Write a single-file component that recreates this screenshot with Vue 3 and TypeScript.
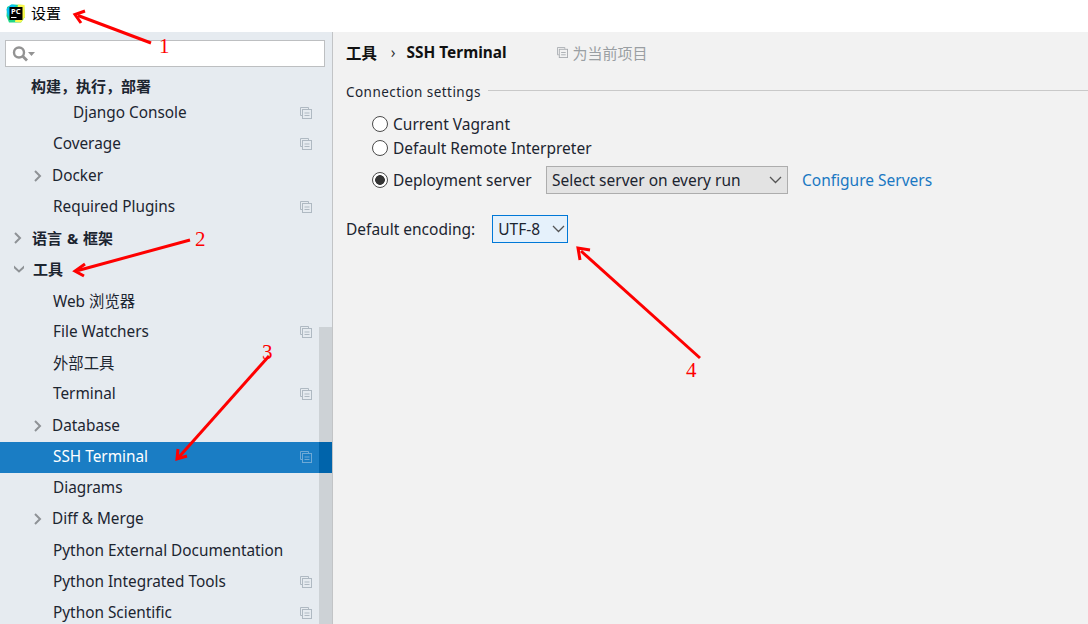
<script setup lang="ts">
type Row = {
  label: string
  indent: number
  chevron?: 'right' | 'down'
  bold?: boolean
  copy?: boolean
  selected?: boolean
}

const rows: Row[] = [
  { label: 'Django Console', indent: 73, copy: true },
  { label: 'Coverage', indent: 53, copy: true },
  { label: 'Docker', indent: 52, chevron: 'right' },
  { label: 'Required Plugins', indent: 53, copy: true },
  { label: '语言 & 框架', indent: 32, chevron: 'right', bold: true },
  { label: '工具', indent: 33, chevron: 'down', bold: true },
  { label: 'Web 浏览器', indent: 53 },
  { label: 'File Watchers', indent: 53, copy: true },
  { label: '外部工具', indent: 53 },
  { label: 'Terminal', indent: 53, copy: true },
  { label: 'Database', indent: 52, chevron: 'right' },
  { label: 'SSH Terminal', indent: 53, copy: true, selected: true },
  { label: 'Diagrams', indent: 53 },
  { label: 'Diff & Merge', indent: 52, chevron: 'right' },
  { label: 'Python External Documentation', indent: 53 },
  { label: 'Python Integrated Tools', indent: 53, copy: true },
  { label: 'Python Scientific', indent: 53, copy: true },
]

const radios = [
  { label: 'Current Vagrant', checked: false },
  { label: 'Default Remote Interpreter', checked: false },
]
</script>

<template>
  <div class="window">
    <header class="titlebar">
      <svg class="logo" width="20" height="19" viewBox="0 0 20 19">
        <path d="M1 3 L6 0.5 L18 1 L19 13 L15 18.5 L3 18.5 L0.5 12 Z" fill="#21d789" />
        <path d="M12 0.5 L18.5 1 L19 13 L15 18.5 L9 18 Z" fill="#fcf84a" />
        <path d="M0.5 5 L5 0.5 L10 1 L2 13 Z" fill="#07c3f2" />
        <rect x="3.5" y="3" width="13" height="13" fill="#000" />
        <rect x="5" y="13" width="5.5" height="1" fill="#fff" />
        <text x="5" y="10" class="logo-text">PC</text>
      </svg>
      <span class="title">设置</span>
    </header>

    <div class="body">
      <aside class="sidebar">
        <div class="search">
          <svg width="28" height="20" viewBox="0 0 28 20">
            <circle cx="8" cy="8.5" r="5" fill="none" stroke="#939393" stroke-width="2.4" />
            <path d="M11.5 12 L16 16.5" stroke="#939393" stroke-width="2.8" />
            <path d="M17 8 h7 l-3.5 4 z" fill="#939393" />
          </svg>
        </div>
        <div class="group-title">构建，执行，部署</div>
        <ul class="tree">
          <li
            v-for="row in rows"
            :key="row.label"
            class="row"
            :class="{ selected: row.selected, bold: row.bold }"
            :style="{ paddingLeft: row.indent + 'px' }"
          >
            <svg
              v-if="row.chevron"
              class="chevron"
              :style="{ left: row.indent - 19 + 'px' }"
              width="10"
              height="12"
              viewBox="0 0 10 12"
            >
              <path
                v-if="row.chevron === 'right'"
                d="M2 1 L7 6 L2 11"
                fill="none"
                stroke="#8e9296"
                stroke-width="2"
              />
              <path v-else d="M-1 3 L5 8.5 L11 3" fill="none" stroke="#8e9296" stroke-width="2" />
            </svg>
            <span>{{ row.label }}</span>
            <svg v-if="row.copy" class="copy" width="12" height="12" viewBox="0 0 12 12">
              <path d="M8.5 2 V0.5 H0.5 V8.5 H2" fill="none" stroke="currentColor" />
              <rect x="2.5" y="2.5" width="9" height="9" fill="none" stroke="currentColor" />
              <path d="M4.5 6 H9.5 M4.5 8.5 H9.5" stroke="currentColor" />
            </svg>
          </li>
        </ul>
        <div class="scrollbar"></div>
      </aside>

      <main class="content">
        <div class="crumbs">
          <span class="crumb">工具</span>
          <span class="sep">›</span>
          <span class="crumb">SSH Terminal</span>
          <span class="scope">
            <svg width="11" height="11" viewBox="0 0 12 12">
              <path d="M8.5 2 V0.5 H0.5 V8.5 H2" fill="none" stroke="#a9adb1" />
              <rect x="2.5" y="2.5" width="9" height="9" fill="none" stroke="#a9adb1" />
              <path d="M4.5 6 H9.5 M4.5 8.5 H9.5" stroke="#a9adb1" />
            </svg>
            为当前项目
          </span>
        </div>

        <div class="section-head">
          <span>Connection settings</span>
          <i></i>
        </div>

        <div class="options">
          <label v-for="r in radios" :key="r.label" class="radio-row">
            <span class="radio"></span>
            {{ r.label }}
          </label>
          <div class="radio-row deploy">
            <span class="radio on"></span>
            <span class="deploy-label">Deployment server</span>
            <div class="combo">
              <span>Select server on every run</span>
              <svg width="13" height="8" viewBox="0 0 13 8">
                <path d="M1 1 L6.5 6.5 L12 1" fill="none" stroke="#555" stroke-width="1.3" />
              </svg>
            </div>
            <a class="link">Configure Servers</a>
          </div>
        </div>

        <div class="encoding">
          <span>Default encoding:</span>
          <div class="combo-focus">
            <span>UTF-8</span>
            <svg width="13" height="8" viewBox="0 0 13 8">
              <path d="M1 1 L6.5 6.5 L12 1" fill="none" stroke="#555" stroke-width="1.3" />
            </svg>
          </div>
        </div>
      </main>
    </div>

    <svg class="marks" width="1088" height="624" viewBox="0 0 1088 624">
      <g fill="none" stroke="#fe0000" stroke-width="3" stroke-linejoin="miter">
        <path d="M151 43 L78 15.5" />
        <path d="M85 11 L75 14.5 L81 23" />
        <path d="M190 240 L78 270.5" />
        <path d="M85 264 L75 271 L84 276" />
        <path d="M269 356 L179 457" />
        <path d="M178 449 L177 459 L187 456" />
        <path d="M700 358 L581 251" />
        <path d="M580 260 L578 248 L590 250" />
      </g>
      <g class="mark-num">
        <text x="159" y="53">1</text>
        <text x="195" y="246">2</text>
        <text x="262" y="359">3</text>
        <text x="686" y="377">4</text>
      </g>
    </svg>
  </div>
</template>

<style scoped>
.window {
  position: relative;
  width: 1088px;
  height: 624px;
  overflow: hidden;
  background: #f2f2f2;
  font-family: "Noto Sans", "Noto Sans CJK SC", sans-serif;
  font-size: 15.5px;
  color: #1c2530;
}

.titlebar {
  display: flex;
  align-items: center;
  height: 32px;
  padding-left: 6px;
  gap: 5px;
  background: #fff;
}

.logo {
  flex: none;
  margin-top: -5px;
}

.logo-text {
  font-size: 7.5px;
  font-weight: 700;
  fill: #fff;
}

.title {
  font-size: 15px;
  color: #000;
  margin-top: -8px;
}

.body {
  display: flex;
  height: 592px;
}

.sidebar {
  position: relative;
  flex: none;
  width: 333px;
  box-sizing: border-box;
  padding-top: 8px;
  background: #e6ebf0;
  border-right: 1px solid #c2c4c6;
  overflow: hidden;
}

.search {
  display: flex;
  align-items: center;
  box-sizing: border-box;
  width: 320px;
  height: 27px;
  margin-left: 5px;
  padding-left: 5px;
  background: #fff;
  border: 1px solid #bdbfc1;
}

.group-title {
  height: 22px;
  margin-top: 9px;
  padding-left: 31px;
  font-size: 15px;
  line-height: 20px;
  font-weight: 700;
}

.tree {
  margin: 0;
  padding: 0;
  list-style: none;
}

.row {
  position: relative;
  display: flex;
  align-items: center;
  box-sizing: border-box;
  height: 31.25px;
  padding-bottom: 3px;
  font-size: 15.35px;
  color: #1c2530;
}

.row.bold {
  font-weight: 700;
  font-size: 15px;
  word-spacing: 1px;
}

.row.selected {
  z-index: 2;
  background: #1a7dc4;
  color: #fff;
}

.chevron {
  position: absolute;
  top: 9px;
}

.copy {
  position: absolute;
  right: 20px;
  top: 9px;
  color: #afb9c2;
}

.selected .copy {
  color: #6ea9d6;
}

.scrollbar {
  position: absolute;
  right: 0;
  top: 295px;
  bottom: 0;
  width: 13px;
  background: #cdd2d6;
}

.selected::after {
  content: "";
  position: absolute;
  right: 0;
  top: 0;
  bottom: 0;
  width: 13px;
  background: #0064ab;
}

.content {
  flex: 1;
  padding: 0 13px;
}

.crumbs {
  display: flex;
  align-items: center;
  height: 40px;
  font-size: 15.4px;
}

.crumb {
  font-weight: 700;
  color: #111;
}

.sep {
  margin: 0 11px 0 14px;
  color: #333;
}

.scope {
  display: flex;
  align-items: center;
  gap: 5px;
  margin-left: 50px;
  font-size: 15px;
  color: #9a9fa3;
}

.section-head {
  display: flex;
  align-items: center;
  gap: 7px;
  margin-top: 11px;
  height: 18px;
  font-size: 13.5px;
  letter-spacing: 0.45px;
}

.section-head i {
  flex: 1;
  height: 1px;
  margin-top: -4px;
  margin-right: -13px;
  background: #c9c9c9;
}

.options {
  margin-top: 11px;
  padding-left: 26px;
}

.radio-row {
  display: flex;
  align-items: center;
  gap: 5px;
  height: 24px;
}

.radio {
  box-sizing: border-box;
  width: 16px;
  height: 16px;
  border: 1.5px solid #4a4a4a;
  border-radius: 50%;
  background: #fff;
}

.radio.on {
  background: radial-gradient(circle, #333 0 4.5px, #fff 5.2px);
}

.deploy {
  height: 28px;
  margin-top: 6px;
}

.deploy-label {
  width: 148px;
  white-space: nowrap;
}

.combo {
  display: flex;
  align-items: center;
  justify-content: space-between;
  box-sizing: border-box;
  width: 242px;
  height: 28px;
  padding: 0 5px;
  background: #e3e3e3;
  border: 1px solid #adadad;
}

.link {
  margin-left: 9px;
  color: #1a78c2;
}

.encoding {
  display: flex;
  align-items: center;
  gap: 17px;
  margin-top: 21px;
}

.combo-focus {
  display: flex;
  align-items: center;
  justify-content: space-between;
  box-sizing: border-box;
  width: 76px;
  height: 28px;
  padding: 0 2px 0 5px;
  background: #e5f1fb;
  border: 1px solid #0078d7;
}

.marks {
  position: absolute;
  left: 0;
  top: 0;
  z-index: 5;
  pointer-events: none;
}

.mark-num text {
  font-family: "Liberation Serif", serif;
  font-size: 21px;
  fill: #fe0000;
}
</style>
